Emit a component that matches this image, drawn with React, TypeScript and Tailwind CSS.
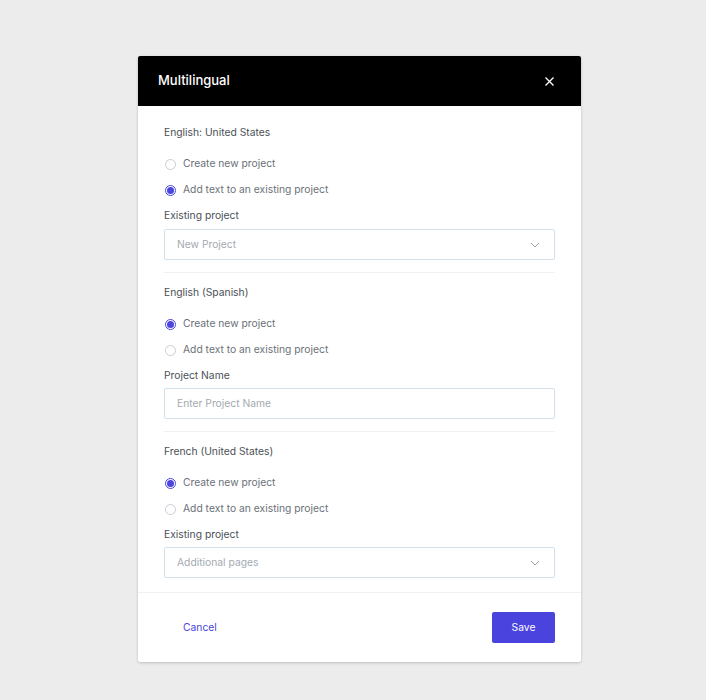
type Section = {
  title: string;
  selected: 0 | 1;
  field: string;
  placeholder: string;
  select: boolean;
};

const sections: Section[] = [
  {
    title: "English: United States",
    selected: 1,
    field: "Existing project",
    placeholder: "New Project",
    select: true,
  },
  {
    title: "English (Spanish)",
    selected: 0,
    field: "Project Name",
    placeholder: "Enter Project Name",
    select: false,
  },
  {
    title: "French (United States)",
    selected: 0,
    field: "Existing project",
    placeholder: "Additional pages",
    select: true,
  },
];

const options = ["Create new project", "Add text to an existing project"];

function Radio({ checked }: { checked: boolean }) {
  return checked ? (
    <span className="flex h-[11px] w-[11px] items-center justify-center rounded-full border border-[#4a45dd] bg-white">
      <span className="h-[7px] w-[7px] rounded-full bg-[#4a45dd]" />
    </span>
  ) : (
    <span className="h-[11px] w-[11px] rounded-full border border-[#c9ced3] bg-white" />
  );
}

function LanguageSection({ s, first, last }: { s: Section; first: boolean; last: boolean }) {
  return (
    <div
      className={`${first ? "pt-[18px]" : "pt-[11px]"} ${last ? "pb-[14px]" : "border-b border-[#eef0f2] pb-[12px]"}`}
    >
      <div className="h-4 text-[10.3px] leading-4 text-[#4b5157]">{s.title}</div>
      <div className="mt-[11px] flex flex-col">
        {options.map((o, i) => (
          <div key={o} className="flex h-[26px] items-center gap-[7px] pl-[1px]">
            <Radio checked={s.selected === i} />
            <span className="text-[10.3px] text-[#6b7178]">{o}</span>
          </div>
        ))}
      </div>
      <div className="mt-[4px] h-4 text-[10.3px] leading-4 text-[#4b5157]">{s.field}</div>
      <div
        className={`${first ? "mt-[6px]" : "mt-[5px]"} flex h-[31px] items-center justify-between rounded-[2px] border border-[#d3e0ea] px-3`}
      >
        <span className="text-[10.3px] text-[#a3aab1]">{s.placeholder}</span>
        {s.select ? (
          <svg width="10" height="6" viewBox="0 0 10 6" className="mr-[2px]">
            <path d="M1 1l4 4 4-4" fill="none" stroke="#9aa3ab" strokeWidth="1" />
          </svg>
        ) : null}
      </div>
    </div>
  );
}

export default function App() {
  return (
    <div
      className="flex min-h-[700px] w-full justify-center bg-[#ececec] pl-[13px] pt-[56px]"
      style={{ fontFamily: "Inter, 'Noto Sans', sans-serif" }}
    >
      <div className="flex h-[606px] w-[443px] flex-col overflow-hidden rounded-[2px] bg-white shadow-[0_1px_3px_rgba(0,0,0,0.2)]">
        <header className="flex h-[50px] shrink-0 items-center justify-between bg-black pl-5 pr-[27px]">
          <h1 className="text-[13px] font-medium text-white">Multilingual</h1>
          <svg width="9" height="9" viewBox="0 0 9 9">
            <path d="M0.5 0.5l8 8M8.5 0.5l-8 8" stroke="white" strokeWidth="1.3" />
          </svg>
        </header>
        <div className="px-[26px]">
          {sections.map((s, i) => (
            <LanguageSection
              key={s.title}
              s={s}
              first={i === 0}
              last={i === sections.length - 1}
            />
          ))}
        </div>
        <footer className="flex flex-1 items-center justify-between border-t border-[#eef0f2] pl-[45px] pr-[26px]">
          <button className="text-[10.3px] text-[#4a45dd]">Cancel</button>
          <button className="h-[31px] w-[63px] rounded-[2px] bg-[#4a43de] text-[10.3px] text-white">
            Save
          </button>
        </footer>
      </div>
    </div>
  );
}
